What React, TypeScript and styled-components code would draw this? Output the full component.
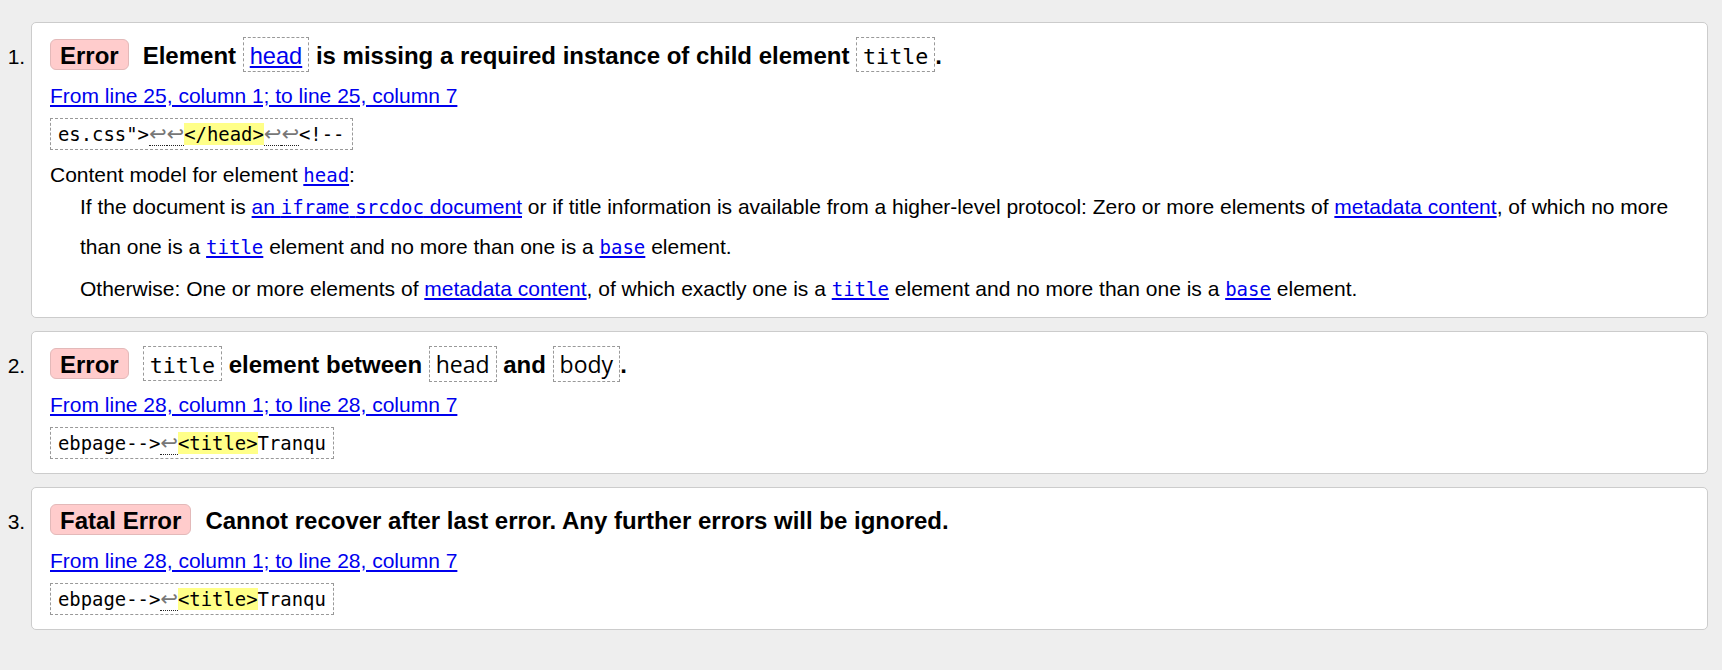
import styled, { createGlobalStyle } from "styled-components";

const GlobalStyle = createGlobalStyle`
  html, body {
    margin: 0;
    background: #eee;
  }
  body {
    font-family: "Liberation Sans", Arial, sans-serif;
    font-size: 21px;
    color: #000;
  }
`;

const MessageList = styled.ol`
  margin: 0;
  padding: 22px 14px 20px 31px;
  list-style: decimal outside;
`;

const Message = styled.li`
  background: #fff;
  border: 1px solid #ccc;
  border-radius: 5px;
  padding: 15px 18px 14px;
  margin-bottom: 13px;
`;

// first line: the badge and the message itself
const Title = styled.p`
  margin: 0;
  font-size: 24px;
  font-weight: bold;
  line-height: 36px;
  white-space: nowrap;
`;

const Badge = styled.strong`
  display: inline-block;
  padding: 3px 9px 0;
  margin-right: 14px;
  line-height: 26px;
  background: #fcc;
  border: 1px solid #e3b9b9;
  border-radius: 6px;
`;

type Face = "mono" | "sans" | "arial";

const faces: Record<Face, string> = {
  mono: `font-family: "DejaVu Sans Mono", monospace; font-size: 21.7px; padding: 6px 6px 2px;`,
  sans: `font-family: "Open Sans", sans-serif; font-size: 23px; padding: 1px 6px 1px;`,
  arial: `font-family: "Liberation Sans", Arial, sans-serif; font-size: 23.6px; padding: 5px 6px 2px;`,
};

const TitleCode = styled.code<{ $face?: Face }>`
  ${(p) => faces[p.$face || "mono"]}
  font-weight: normal;
  line-height: 1;
  border: 1px dashed #999;
`;

const Link = styled.a`
  color: #00e;
  text-decoration: underline;
`;

const Location = styled.p`
  margin: 8px 0 0;
  line-height: 28px;
`;

const Extract = styled.code`
  display: block;
  width: fit-content;
  margin-top: 8px;
  padding: 3px 7px;
  border: 1px dashed #999;
  font-family: "DejaVu Sans Mono", monospace;
  font-size: 18.9px;
  line-height: 24px;
  white-space: pre;
`;

const Mark = styled.b`
  font-weight: normal;
  background: #ff8;
`;

// one line break of the source, drawn as ↩
const LineBreak = styled.span`
  display: inline-block;
  width: 17.6px;
  text-align: center;
  font-family: "DejaVu Sans", sans-serif;
  font-size: 21px;
  line-height: 22px;
  color: #777;
  border-bottom: 1px dotted #222;
`;

const Model = styled.dl`
  margin: 13px 0 -6px;
`;

const ModelTerm = styled.dt`
  line-height: 24px;
`;

const ModelDesc = styled.dd`
  margin: 0 0 0 30px;
`;

const ModelPara = styled.p`
  margin: 0;
  line-height: 40px;
  & + & {
    margin-top: 2px;
  }
`;

const InlineCode = styled.code`
  font-family: "DejaVu Sans Mono", monospace;
  font-size: 19px;
  line-height: 1;
`;

const App = () => {
  return (
    <>
      <GlobalStyle />
      <MessageList>
        <Message>
          <Title>
            <Badge>Error</Badge>
            Element{" "}
            <TitleCode $face="arial">
              <Link href="#">head</Link>
            </TitleCode>{" "}
            is missing a required instance of child element <TitleCode>title</TitleCode>.
          </Title>
          <Location>
            <Link href="#">From line 25, column 1; to line 25, column 7</Link>
          </Location>
          <Extract>
            es.css"&gt;<LineBreak>↩</LineBreak>
            <LineBreak>↩</LineBreak>
            <Mark>&lt;/head&gt;</Mark>
            <LineBreak>↩</LineBreak>
            <LineBreak>↩</LineBreak>&lt;!--
          </Extract>
          <Model>
            <ModelTerm>
              Content model for element{" "}
              <Link href="#">
                <InlineCode>head</InlineCode>
              </Link>
              :
            </ModelTerm>
            <ModelDesc>
              <ModelPara>
                If the document is{" "}
                <Link href="#">
                  an <InlineCode>iframe</InlineCode> <InlineCode>srcdoc</InlineCode> document
                </Link>{" "}
                or if title information is available from a higher-level protocol: Zero or more
                elements of <Link href="#">metadata content</Link>, of which no more than one is a{" "}
                <Link href="#">
                  <InlineCode>title</InlineCode>
                </Link>{" "}
                element and no more than one is a{" "}
                <Link href="#">
                  <InlineCode>base</InlineCode>
                </Link>{" "}
                element.
              </ModelPara>
              <ModelPara>
                Otherwise: One or more elements of <Link href="#">metadata content</Link>, of which
                exactly one is a{" "}
                <Link href="#">
                  <InlineCode>title</InlineCode>
                </Link>{" "}
                element and no more than one is a{" "}
                <Link href="#">
                  <InlineCode>base</InlineCode>
                </Link>{" "}
                element.
              </ModelPara>
            </ModelDesc>
          </Model>
        </Message>

        <Message>
          <Title>
            <Badge>Error</Badge>
            <TitleCode>title</TitleCode> element between <TitleCode $face="sans">head</TitleCode> and{" "}
            <TitleCode $face="sans">body</TitleCode>.
          </Title>
          <Location>
            <Link href="#">From line 28, column 1; to line 28, column 7</Link>
          </Location>
          <Extract>
            ebpage--&gt;<LineBreak>↩</LineBreak>
            <Mark>&lt;title&gt;</Mark>Tranqu
          </Extract>
        </Message>

        <Message>
          <Title>
            <Badge>Fatal Error</Badge>
            Cannot recover after last error. Any further errors will be ignored.
          </Title>
          <Location>
            <Link href="#">From line 28, column 1; to line 28, column 7</Link>
          </Location>
          <Extract>
            ebpage--&gt;<LineBreak>↩</LineBreak>
            <Mark>&lt;title&gt;</Mark>Tranqu
          </Extract>
        </Message>
      </MessageList>
    </>
  );
};

export default App;
